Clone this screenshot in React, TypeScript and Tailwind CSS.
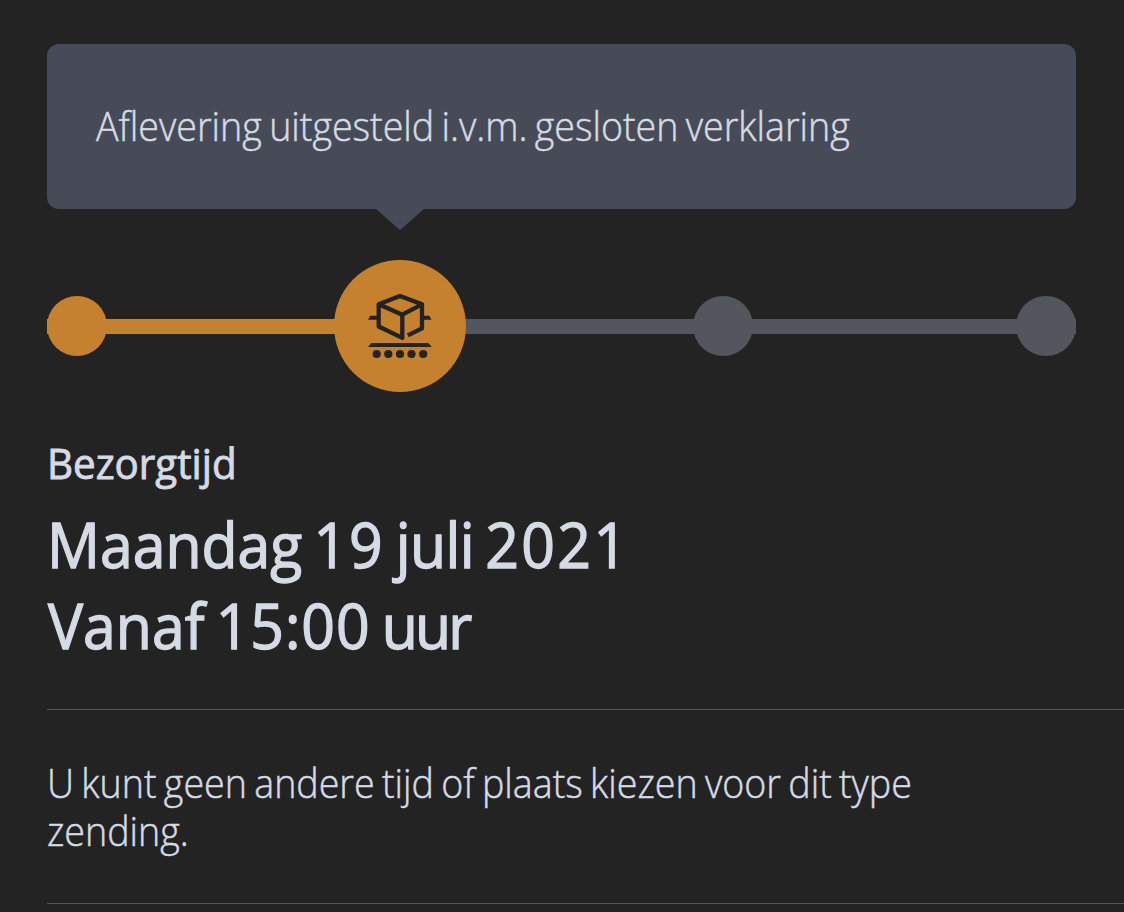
function ConveyorIcon() {
  return (
    <svg width="68" height="68" viewBox="366 292 68 68" fill="none" aria-hidden="true">
      <g stroke="#232323" strokeWidth="4.3" strokeLinejoin="round">
        <path d="M402.3 314.7 378.7 304.3 400 296.1 422 304.3Z" />
        <path d="M378.7 304.3V326.5L402.3 337.9V314.7" />
        <path d="M422 304.3V328.3L407.8 335.4" />
      </g>
      <g fill="#232323">
        <path d="M368 319.8 370.3 315.7H378V319.8Z" />
        <path d="M423 315.7H429.3L431.5 319.8H423Z" />
        <path d="M368 347.1 371.2 343H428.3L431.8 347.1Z" />
        <circle cx="376.7" cy="354" r="4.1" />
        <circle cx="388.3" cy="354" r="4.1" />
        <circle cx="400" cy="354" r="4.1" />
        <circle cx="411.5" cy="354" r="4.1" />
        <circle cx="423.2" cy="354" r="4.1" />
      </g>
    </svg>
  );
}

function Progress() {
  return (
    <div className="mt-[30px] flex h-[132px] items-center">
      <div className="flex h-[15px] w-[30px] items-center bg-[#c5812d]">
        <div className="size-[60px] shrink-0 rounded-full bg-[#c5812d]" />
      </div>
      <div className="h-[15px] w-[258px] bg-[#c5812d]" />
      <div className="z-10 -mx-px flex size-[132px] shrink-0 items-center justify-center rounded-full bg-[#c5812d]">
        <ConveyorIcon />
      </div>
      <div className="h-[15px] w-[229px] bg-[#54565d]" />
      <div className="-mx-px size-[60px] shrink-0 rounded-full bg-[#54565d]" />
      <div className="h-[15px] flex-1 bg-[#54565d]" />
      <div className="flex h-[15px] w-[30px] items-center justify-end bg-[#54565d]">
        <div className="size-[60px] shrink-0 rounded-full bg-[#54565d]" />
      </div>
    </div>
  );
}

const bodyText =
  "origin-left scale-x-[0.94] text-[40px] leading-[48px] font-light whitespace-nowrap [word-spacing:-2.6px] [-webkit-text-stroke:0.5px_#d5dae4]";

export default function App() {
  return (
    <main className="h-[912px] w-[1124px] overflow-hidden bg-[#232323] pt-11 pl-[47px] font-['Open_Sans',sans-serif] text-[#d5dae4]">
      <div className="w-[1029px]">
        <div className="flex h-[165px] items-center rounded-[12px] bg-[#474b57] px-[49px] pb-[2px]">
          <p className={bodyText}>Aflevering uitgesteld i.v.m. gesloten verklaring</p>
        </div>
        <svg className="ml-[329px] block" width="48" height="21" viewBox="0 0 48 21" aria-hidden="true">
          <path d="M0 0H48L24 21Z" fill="#474b57" />
        </svg>
        <Progress />
      </div>
      <section className="mt-[47px] h-[270px] whitespace-nowrap">
        <h2 className="origin-left scale-x-[0.96] text-[42px] leading-[48px] [-webkit-text-stroke:0.9px_#d5dae4]">
          Bezorgtijd
        </h2>
        <p className="mt-[16px] origin-left scale-x-[0.935] text-[63px] leading-[81px] [word-spacing:-4.4px] [-webkit-text-stroke:1.4px_#d5dae4]">
          Maandag <span className="tracking-[2px]">19</span> <span className="tracking-[-0.7px]">juli</span>{" "}
          <span className="tracking-[2.6px]">2021</span>
          <br />
          <span className="ml-px">Vanaf</span> <span className="tracking-[1px]">15:00</span>{" "}
          <span className="tracking-[-3px]">uur</span>
        </p>
      </section>
      <section className="h-[195px] border-y border-[#54565d] pt-[49px]">
        <p className={bodyText}>
          U kunt geen andere tijd of plaats kiezen voor dit type
          <br />
          zending.
        </p>
      </section>
    </main>
  );
}
